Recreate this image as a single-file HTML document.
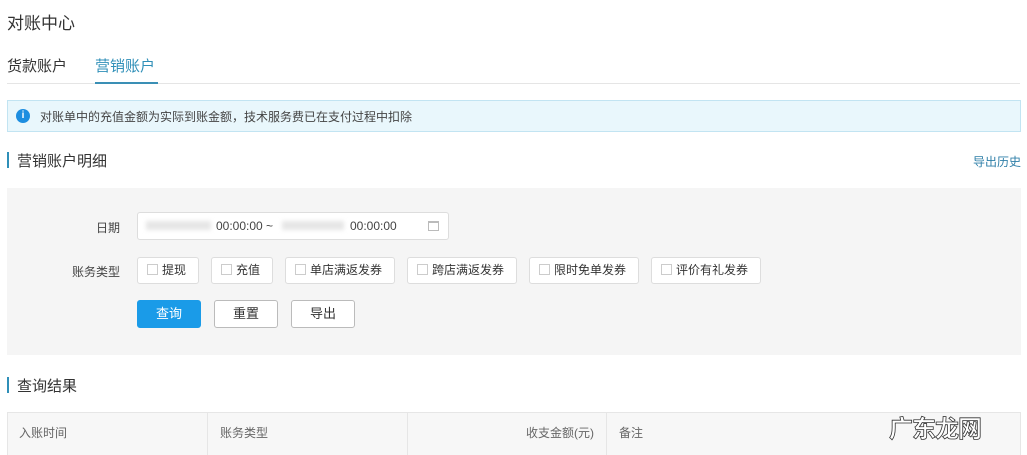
<!DOCTYPE html>
<html><head><meta charset="utf-8"><style>
*{margin:0;padding:0;box-sizing:border-box}
body{width:1027px;height:455px;overflow:hidden;background:#fff;font-family:"Liberation Sans","Noto Sans CJK SC",sans-serif;color:#333;position:relative}
.a{position:absolute;white-space:nowrap}
.cb{position:absolute;top:257px;height:27px;border:1px solid #ddd;background:#fff;border-radius:3px;font-size:12px;line-height:25px;color:#333}
.cb i{display:inline-block;width:11px;height:11px;border:1px solid #ccc;margin:0 4px 0 9px;vertical-align:-1px}
.btn{position:absolute;top:300px;height:28px;width:64px;border:1px solid #bbb;border-radius:3px;background:#fff;text-align:center;font-size:13px;line-height:26px}
.th{position:absolute;top:412px;height:43px;border-right:1px solid #e6e6e6;font-size:12px;line-height:43px;color:#666;padding:0 12px}
</style></head><body>
<div class="a" style="left:7px;top:9px;font-size:17px;color:#333">对账中心</div>
<div class="a" style="left:7px;top:55px;font-size:15px;color:#333">货款账户</div>
<div class="a" style="left:95px;top:55px;font-size:15px;color:#2f8fb8">营销账户</div>
<div class="a" style="left:7px;top:83px;width:1013px;height:1px;background:#e5e5e5"></div>
<div class="a" style="left:95px;top:82px;width:63px;height:2px;background:#3a8fb5"></div>
<div class="a" style="left:7px;top:100px;width:1014px;height:32px;background:#e9f7fc;border:1px solid #c2e4f2"></div>
<div class="a" style="left:16px;top:109px;width:14px;height:14px;border-radius:50%;background:#1d8ee0;color:#fff;font-size:10px;line-height:14px;text-align:center;font-weight:bold">i</div>
<div class="a" style="left:40px;top:108px;font-size:12px;color:#444">对账单中的充值金额为实际到账金额，技术服务费已在支付过程中扣除</div>
<div class="a" style="left:7px;top:152px;width:2px;height:16px;background:#2f8fb8"></div>
<div class="a" style="left:17px;top:150px;font-size:15px;color:#333">营销账户明细</div>
<div class="a" style="right:6px;top:153px;font-size:12px;color:#2f7fa8">导出历史</div>
<div class="a" style="left:7px;top:188px;width:1014px;height:167px;background:#f5f5f5"></div>
<div class="a" style="left:96px;top:219px;font-size:12px;color:#444">日期</div>
<div class="a" style="left:137px;top:212px;width:312px;height:28px;background:#fff;border:1px solid #ddd;border-radius:3px"></div>
<div class="a" style="left:146px;top:221px;width:65px;height:9px;background:#e6e6e6;filter:blur(2px)"></div>
<div class="a" style="left:216px;top:219px;font-size:12px;color:#444">00:00:00 ~</div>
<div class="a" style="left:282px;top:221px;width:62px;height:9px;background:#e6e6e6;filter:blur(2px)"></div>
<div class="a" style="left:350px;top:219px;font-size:12px;color:#444">00:00:00</div>
<div class="a" style="left:428px;top:221px;width:11px;height:10px;border:1px solid #bbb;border-top-width:2px"></div>
<div class="a" style="left:72px;top:263px;font-size:12px;color:#444">账务类型</div>
<div class="cb" style="left:137px;width:62px"><i></i>提现</div>
<div class="cb" style="left:211px;width:62px"><i></i>充值</div>
<div class="cb" style="left:285px;width:110px"><i></i>单店满返发券</div>
<div class="cb" style="left:407px;width:110px"><i></i>跨店满返发券</div>
<div class="cb" style="left:529px;width:110px"><i></i>限时免单发券</div>
<div class="cb" style="left:651px;width:110px"><i></i>评价有礼发券</div>
<div class="btn" style="left:137px;background:#1a9be8;border-color:#1a9be8;color:#fff">查询</div>
<div class="btn" style="left:214px">重置</div>
<div class="btn" style="left:291px">导出</div>
<div class="a" style="left:7px;top:377px;width:2px;height:16px;background:#2f8fb8"></div>
<div class="a" style="left:17px;top:375px;font-size:15px;color:#333">查询结果</div>
<div class="a" style="left:7px;top:412px;width:1014px;height:43px;background:#f7f7f7;border:1px solid #e6e6e6;border-bottom:none"></div>
<div class="th" style="left:7px;width:201px">入账时间</div>
<div class="th" style="left:208px;width:200px">账务类型</div>
<div class="th" style="left:408px;width:199px;text-align:right">收支金额(元)</div>
<div class="th" style="left:607px;width:200px;border:none">备注</div>
<div class="a" style="left:889px;top:409px;font-size:24px;font-weight:bold;color:#fff;-webkit-text-stroke:0.8px #333;letter-spacing:-1px">广东龙网</div>
</body></html>
